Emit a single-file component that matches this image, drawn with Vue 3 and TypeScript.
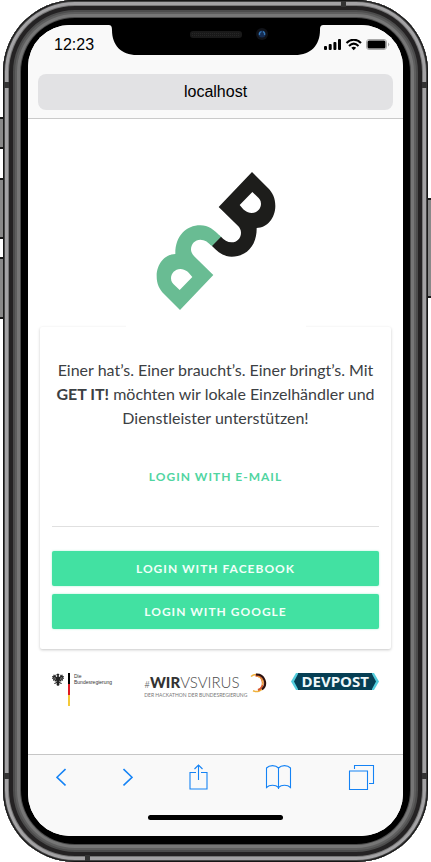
<script setup lang="ts">
import { ref } from 'vue'

interface Provider {
  id: string
  label: string
}

const address = ref<string>('localhost')
const providers: Provider[] = [
  { id: 'facebook', label: 'Login with Facebook' },
  { id: 'google', label: 'Login with Google' },
]
</script>

<template>
  <div class="device">
    <span class="key key-mute"></span>
    <span class="key key-up"></span>
    <span class="key key-down"></span>
    <span class="key key-power"></span>
    <span class="band band-left band-upper"></span>
    <span class="band band-right band-upper"></span>
    <span class="band band-left band-lower"></span>
    <span class="band band-right band-lower"></span>
    <span class="band band-top"></span>
    <span class="band band-bottom"></span>

    <div class="screen">
      <header class="browser-bar">
        <div class="status">
          <time class="clock">12:23</time>
          <svg class="notch" viewBox="0 0 216 31" aria-hidden="true">
            <path d="M0 0H216C213 0 212 1 212 5C212 20 203 30 187 30H29C13 30 4 20 4 5C4 1 3 0 0 0Z" fill="#000" />
            <rect x="82" y="6" width="52" height="7" rx="3" fill="#191919" />
            <path d="M84 8.500H132M84 10.500H132" stroke="#262626" stroke-dasharray="1 1" />
            <circle cx="154" cy="9" r="6" fill="#101218" />
            <circle cx="154" cy="9" r="3.500" fill="#152d54" />
            <path d="M151.500 10a3 3 0 0 1 2-3.500M155 6.500a3 3 0 0 1 1.500 3.500" stroke="#3579b8" stroke-width="1.300" fill="none" />
          </svg>
          <svg class="signals" viewBox="0 0 66 12" aria-hidden="true">
            <rect x="0" y="7" width="3" height="4" rx="1" />
            <rect x="4.700" y="5" width="3" height="6" rx="1" />
            <rect x="9.400" y="3" width="3" height="8" rx="1" />
            <rect x="14" y="0" width="3" height="11" rx="1" />
            <path d="M22.500 4C26.500-.4 33-.4 37 4M25 7C28 4 31.500 4 34.500 7" fill="none" stroke="#000" stroke-width="2" />
            <path d="M27.300 8.800Q29.700 6.800 32.200 8.800L29.700 11.300Z" />
            <rect x="42.500" y=".5" width="20" height="10" rx="2.500" fill="#fff" stroke="#aaa" />
            <rect x="43.500" y="1.500" width="18" height="8" rx="1.500" />
            <path d="M64 3.500Q66.500 5.500 64 7.500Z" fill="#aaa" />
          </svg>
        </div>
        <input v-model="address" class="address" type="text" aria-label="Address" />
      </header>

      <main class="page">
        <svg class="logo" viewBox="-42 -27 540 540" role="img" aria-label="Get it">
          <defs>
            <path
              id="hook"
              fill-rule="evenodd"
              d="M336 36L236 141L292 196C300 203 303 211 303 218C303 234 291 247 275 247C262 247 252 240 243 230L216 258C233 276 251 290 275 290C318 290 351 257 350 204C381 203 406 175 406 138C406 114 398 98 384 84ZM337 96L299 135C309 148 319 159 335 159C351 159 363 146 363 131C363 120 357 115 352 110Z"
            />
          </defs>
          <rect x="-42" y="-27" width="540" height="540" fill="#fff" />
          <use href="#hook" fill="#69bc93" transform="rotate(180 228 243)" />
          <path d="M238 226L244 231L217 259L211 254Z" fill="#69bc93" />
          <use href="#hook" fill="#1d1d1b" />
        </svg>

        <section class="card">
          <p class="intro">
            Einer hat’s. Einer braucht’s. Einer bringt’s. Mit <strong>GET IT!</strong> möchten wir lokale
            Einzelhändler und Dienstleister unterstützen!
          </p>
          <button class="btn btn-flat" type="button">Login with E-Mail</button>
          <hr class="rule" />
          <div class="providers">
            <button v-for="p in providers" :key="p.id" class="btn btn-solid" type="button">{{ p.label }}</button>
          </div>
        </section>

        <footer class="partners">
          <div class="bund">
            <svg class="eagle" viewBox="0 0 24 26" aria-hidden="true">
              <path
                d="M12 1L15 3L13.500 5V7L16 8L17 3L19 5L20 2L21.500 6L24 6L22.500 9L24 12L21.500 12L22 16L19 14L18 18L15.500 15L15 18L19 20L20 22L16 21L14 20L15 24L12 26L9 24L10 20L8 21L4 22L5 20L9 18L8.500 15L6 18L5 14L2 16L2.500 12L0 12L1.500 9L0 6L2.500 6L4 2L5 5L7 3L8 8L10.500 7V5L8 4L10 2Z"
                fill="#222"
              />
              <path d="M3 8L8 11M2.500 11L8 13M21 8L16 11M21.500 11L16 13" stroke="#ddd" stroke-width=".8" />
            </svg>
            <span class="flag"></span>
            <span class="bund-name">Die<br />Bundesregierung</span>
          </div>
          <div class="wirvs">
            <div>
              <div class="wirvs-name"><span class="hash">#</span><b>WIR</b>VSVIRUS</div>
              <div class="wirvs-sub">DER HACKATHON DER BUNDESREGIERUNG</div>
            </div>
            <svg class="ring" viewBox="0 0 20 20" aria-hidden="true" fill="none">
              <path d="M4 3.500A8.500 8.500 0 1 1 6 17.800" stroke="#f0b23c" stroke-width="1.500" />
              <path d="M8.500 2.500A7.500 7.500 0 0 1 11 17" stroke="#d8572a" stroke-width="2" />
              <path d="M9 1.500A8.500 8.500 0 0 1 15 16.500" stroke="#2c1110" stroke-width="2" />
              <path d="M10.500 3.500A6.500 6.500 0 0 1 15.500 12" stroke="#f6c452" />
            </svg>
          </div>
          <div class="devpost">
            <svg class="chevron" viewBox="0 0 7 17" aria-hidden="true">
              <path d="M5 0H7V17H5L0 8.500Z" fill="#54cddd" />
              <path d="M7 1V16L3 8.500Z" fill="#063f54" />
            </svg>
            <span class="devpost-name">DEVPOST</span>
            <svg class="chevron" viewBox="0 0 7 17" aria-hidden="true">
              <path d="M2 0H0V17H2L7 8.500Z" fill="#54cddd" />
              <path d="M0 1V16L4 8.500Z" fill="#063f54" />
            </svg>
          </div>
        </footer>
      </main>

      <nav class="toolbar" aria-label="Browser">
        <div class="tools">
          <button class="tool" type="button" aria-label="Back">
            <svg width="10" height="26" viewBox="0 0 10 26"><path d="M9.500 5L1 13.300L9.500 21.500" stroke-width="1.600" /></svg>
          </button>
          <button class="tool" type="button" aria-label="Forward">
            <svg width="10" height="26" viewBox="0 0 10 26"><path d="M.5 5L9 13.300L.5 21.500" stroke-width="1.600" /></svg>
          </button>
          <button class="tool" type="button" aria-label="Share">
            <svg width="19" height="26" viewBox="0 0 19 26"><path d="M7 8.500H1V25H18V8.500H12M9.500 16V1M5.500 5L9.500 1L13.500 5" /></svg>
          </button>
          <button class="tool" type="button" aria-label="Bookmarks">
            <svg width="27" height="26" viewBox="0 0 27 26">
              <path d="M13.500 4C10.500 .8 4.500 .8 1.500 4V23.500C4.500 20.500 10.500 20.500 13.500 23.500C16.500 20.500 22.500 20.500 25.500 23.500V4C22.500 .8 16.500 .8 13.500 4V25" />
            </svg>
          </button>
          <button class="tool" type="button" aria-label="Tabs">
            <svg width="27" height="26" viewBox="0 0 27 26"><path d="M1.500 7H19.500V25.500H1.500ZM6.500 5V1.500H25.500V19.500H21" /></svg>
          </button>
        </div>
        <span class="home"></span>
      </nav>
    </div>
  </div>
</template>

<style>
body {
  background: #fff;
}
</style>

<style scoped>
* {
  box-sizing: border-box;
}

.device {
  position: relative;
  display: flex;
  min-height: 100vh;
  margin: 0 3px;
  padding: 25px 25px 26px;
  border-radius: 72px;
  background: #000;
  box-shadow:
    inset 0 0 0 1px #161616,
    inset 0 0 0 2px #454545,
    inset 0 0 0 5px #a3a2a4,
    inset 0 0 0 6px #777,
    inset 0 0 0 10px #242223,
    inset 0 0 0 12px #4c4c4c,
    inset 0 0 0 14px #5e5e5e,
    inset 0 0 0 17px #767676,
    inset 0 0 0 18px #4a4a4a;
}

.key {
  position: absolute;
  width: 4px;
  border: solid #1a1a1a;
  background: #888;
}

.key-mute,
.key-up,
.key-down {
  left: -3px;
  border-width: 2px 1px 2px 0;
}

.key-mute {
  top: 117px;
  height: 32px;
}

.key-up {
  top: 178px;
  height: 61px;
}

.key-down {
  top: 257px;
  height: 62px;
}

.key-power {
  top: 198px;
  right: -3px;
  height: 100px;
  border-width: 2px 0 2px 1px;
}

.band {
  position: absolute;
  width: 5px;
  height: 6px;
  background: #333;
}

.band-left {
  left: 1px;
}

.band-right {
  right: 1px;
}

.band-upper {
  top: 82px;
}

.band-lower {
  bottom: 83px;
}

.band-top {
  top: 1px;
  right: 82px;
}

.band-bottom {
  bottom: 1px;
  left: 82px;
}

.screen {
  display: flex;
  flex: 1;
  flex-direction: column;
  min-width: 0;
  overflow: hidden;
  border-radius: 42px;
  background: #fff;
}

.browser-bar {
  display: flex;
  flex-direction: column;
  padding-bottom: 8px;
  border-bottom: 1px solid #cacaca;
  background: #f9f9f9;
}

.status {
  display: grid;
  grid-template-columns: 1fr 216px 1fr;
  height: 49px;
}

.clock {
  padding-left: 26px;
  padding-top: 10px;
  font: 16px/20px "Liberation Sans", Arial, sans-serif;
  white-space: nowrap;
}

.notch {
  width: 216px;
  height: 31px;
}

.signals {
  width: 66px;
  height: 12px;
  margin-top: 14px;
}

.address {
  height: 36px;
  margin: 0 10px;
  padding: 0;
  border: 0;
  border-radius: 8px;
  background: #e2e2e4;
  color: #000;
  font: 16px/20px "Liberation Sans", Arial, sans-serif;
  text-align: center;
}

.page {
  display: flex;
  flex: 1;
  flex-direction: column;
  padding: 32px 12px 24px;
  font-family: Lato, sans-serif;
}

.logo {
  position: relative;
  align-self: center;
  width: 180px;
  height: 180px;
}

.card {
  display: flex;
  flex-direction: column;
  margin-top: -4px;
  padding: 31px 12px 20px;
  border-radius: 2px;
  box-shadow: 0 1px 3px rgba(0, 0, 0, 0.22);
}

.intro {
  margin: 0;
  color: #3c4043;
  font: 16px/24px Lato, sans-serif;
  text-align: center;
}

.btn {
  height: 35px;
  padding: 0;
  border: 0;
  border-radius: 2px;
  font: 700 12px/16px Lato, sans-serif;
  letter-spacing: 1px;
  text-transform: uppercase;
  cursor: pointer;
}

.btn-flat {
  align-self: center;
  margin-top: 29px;
  background: transparent;
  color: #50d5a1;
}

.btn-solid {
  background: #42e1a2;
  color: #f1fff9;
  box-shadow: 0 0 2px rgba(66, 225, 162, 0.5);
}

.rule {
  width: 100%;
  margin: 32px 0 24px;
  border: 0;
  border-top: 1px solid #e0e0e0;
}

.providers {
  display: grid;
  gap: 8px;
}

.partners {
  display: flex;
  align-items: flex-start;
  justify-content: space-between;
  margin-top: 24px;
  padding: 0 12px;
}

.bund {
  display: flex;
  gap: 4px;
  padding-right: 8px;
}

.eagle {
  width: 12px;
  height: 13px;
}

.flag {
  width: 2px;
  height: 33px;
  background: linear-gradient(#000 0 33%, #df1a22 33% 67%, #f4c93a 67%);
}

.bund-name {
  color: #333;
  font: 5px/6px "Liberation Sans", Arial, sans-serif;
}

.wirvs {
  display: flex;
}

.wirvs-name {
  color: #4c4c4c;
  font: 300 15px/18px Lato, sans-serif;
}

.wirvs-name b {
  color: #333;
  font-weight: 900;
}

.hash {
  font-size: 10px;
}

.wirvs-sub {
  color: #777;
  font: 5px/5px "Liberation Sans Narrow", Lato, sans-serif;
  white-space: nowrap;
}

.ring {
  width: 20px;
  height: 20px;
}

.devpost {
  display: flex;
}

.chevron {
  width: 7px;
  height: 17px;
}

.devpost-name {
  padding: 0 3px;
  background: #063f54;
  color: #eef7f9;
  font: 700 15px/17px "Open Sans", sans-serif;
}

.toolbar {
  display: flex;
  flex-direction: column;
  align-items: center;
  padding: 9px 28px 16px;
  border-top: 1px solid #c6c6c6;
  background: #f9f9f9;
}

.tools {
  display: flex;
  align-self: stretch;
  justify-content: space-between;
}

.tool {
  display: flex;
  padding: 0;
  border: 0;
  background: none;
  cursor: pointer;
}

.tool svg {
  fill: none;
  stroke: #1583f5;
  stroke-width: 1.1;
}

.home {
  width: 135px;
  height: 5px;
  margin-top: 25px;
  border-radius: 3px;
  background: #000;
}
</style>
